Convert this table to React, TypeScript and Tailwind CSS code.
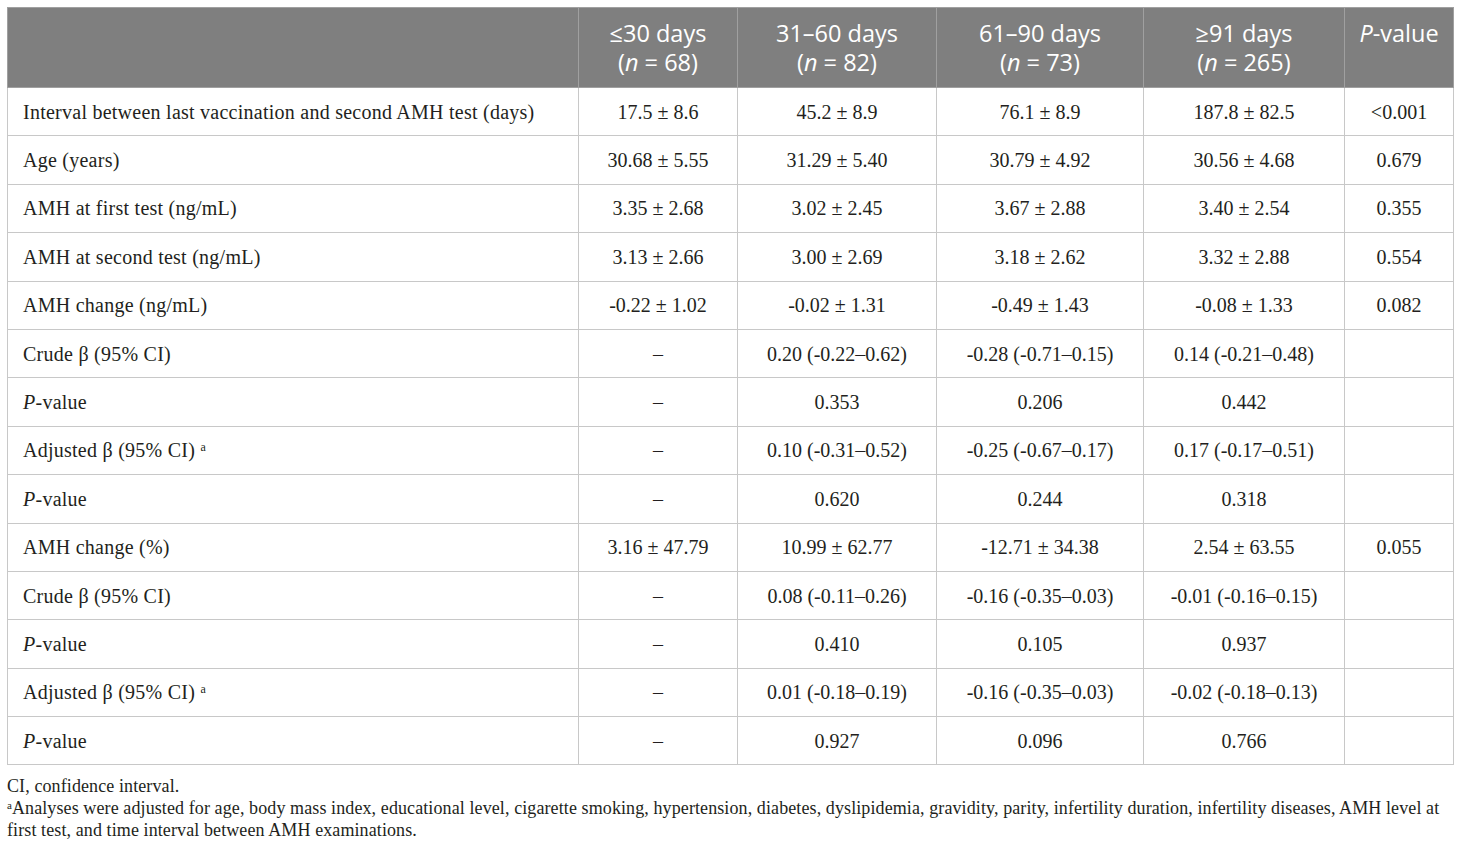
const rows: { label: React.ReactNode; cells: string[]; p: string }[] = [
  { label: "Interval between last vaccination and second AMH test (days)", cells: ["17.5 ± 8.6", "45.2 ± 8.9", "76.1 ± 8.9", "187.8 ± 82.5"], p: "<0.001" },
  { label: "Age (years)", cells: ["30.68 ± 5.55", "31.29 ± 5.40", "30.79 ± 4.92", "30.56 ± 4.68"], p: "0.679" },
  { label: "AMH at first test (ng/mL)", cells: ["3.35 ± 2.68", "3.02 ± 2.45", "3.67 ± 2.88", "3.40 ± 2.54"], p: "0.355" },
  { label: "AMH at second test (ng/mL)", cells: ["3.13 ± 2.66", "3.00 ± 2.69", "3.18 ± 2.62", "3.32 ± 2.88"], p: "0.554" },
  { label: "AMH change (ng/mL)", cells: ["-0.22 ± 1.02", "-0.02 ± 1.31", "-0.49 ± 1.43", "-0.08 ± 1.33"], p: "0.082" },
  { label: "Crude β (95% CI)", cells: ["–", "0.20 (-0.22–0.62)", "-0.28 (-0.71–0.15)", "0.14 (-0.21–0.48)"], p: "" },
  { label: "pv", cells: ["–", "0.353", "0.206", "0.442"], p: "" },
  { label: "adj", cells: ["–", "0.10 (-0.31–0.52)", "-0.25 (-0.67–0.17)", "0.17 (-0.17–0.51)"], p: "" },
  { label: "pv", cells: ["–", "0.620", "0.244", "0.318"], p: "" },
  { label: "AMH change (%)", cells: ["3.16 ± 47.79", "10.99 ± 62.77", "-12.71 ± 34.38", "2.54 ± 63.55"], p: "0.055" },
  { label: "Crude β (95% CI)", cells: ["–", "0.08 (-0.11–0.26)", "-0.16 (-0.35–0.03)", "-0.01 (-0.16–0.15)"], p: "" },
  { label: "pv", cells: ["–", "0.410", "0.105", "0.937"], p: "" },
  { label: "adj", cells: ["–", "0.01 (-0.18–0.19)", "-0.16 (-0.35–0.03)", "-0.02 (-0.18–0.13)"], p: "" },
  { label: "pv", cells: ["–", "0.927", "0.096", "0.766"], p: "" },
];

function Label({ value }: { value: React.ReactNode }) {
  if (value === "pv") {
    return (
      <>
        <i>P</i>-value
      </>
    );
  }
  if (value === "adj") {
    return (
      <>
        Adjusted β (95% CI) <sup className="text-[12px]">a</sup>
      </>
    );
  }
  return <>{value}</>;
}

const headers = [
  ["≤30 days", "68"],
  ["31–60 days", "82"],
  ["61–90 days", "73"],
  ["≥91 days", "265"],
];

export default function App() {
  return (
    <div className="min-h-[850px] w-[1460px] bg-white pt-[7px] pl-[7px] text-[#231f20]">
      <table
        className="w-[1446px] table-fixed border-collapse border border-[#c8c8c8] text-[20px]"
        style={{ fontFamily: '"Liberation Serif", serif' }}
      >
        <colgroup>
          <col className="w-[571px]" />
          <col className="w-[159px]" />
          <col className="w-[199px]" />
          <col className="w-[207px]" />
          <col className="w-[201px]" />
          <col className="w-[109px]" />
        </colgroup>
        <thead>
          <tr
            className="h-[80px] bg-[#7f7f7f] align-top text-[23.5px] leading-[29px] text-white"
            style={{ fontFamily: '"Open Sans", sans-serif' }}
          >
            <th className="border border-[#a0a0a0]" />
            {headers.map(([d, n]) => (
              <th key={d} className="border border-[#a0a0a0] pt-[11px] font-normal">
                {d}
                <br />(<i>n</i> = {n})
              </th>
            ))}
            <th className="border border-[#a0a0a0] pt-[11px] font-normal">
              <i>P</i>-value
            </th>
          </tr>
        </thead>
        <tbody>
          {rows.map((r, i) => (
            <tr key={i} className="h-[48.4px]">
              <td className="border border-[#c8c8c8] pl-[15px] tracking-[0.25px]">
                <Label value={r.label} />
              </td>
              {r.cells.map((c, j) => (
                <td key={j} className="border border-[#c8c8c8] text-center">
                  {c}
                </td>
              ))}
              <td className="border border-[#c8c8c8] text-center">{r.p}</td>
            </tr>
          ))}
        </tbody>
      </table>
      <div
        className="mt-[10px] w-[1450px] text-[18px] leading-[22px] tracking-[0.1px]"
        style={{ fontFamily: '"Liberation Serif", serif' }}
      >
        <p>CI, confidence interval.</p>
        <p>
          <sup className="text-[11px]">a</sup>Analyses were adjusted for age, body mass index, educational level, cigarette
          smoking, hypertension, diabetes, dyslipidemia, gravidity, parity, infertility duration, infertility diseases, AMH level
          at first test, and time interval between AMH examinations.
        </p>
      </div>
    </div>
  );
}
